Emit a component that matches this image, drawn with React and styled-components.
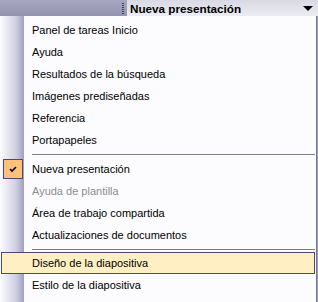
import React from 'react'
import styled, { createGlobalStyle } from 'styled-components'

const Global = createGlobalStyle`
  html, body {
    margin: 0;
    padding: 0;
    background: #9d9db7;
    overflow: hidden;
  }
`

const Frame = styled.div`
  width: 318px;
  height: 302px;
  display: flex;
  flex-direction: column;
  font-family: Tahoma, "Liberation Sans", Arial, sans-serif;
  font-size: 11px;
  color: #000;
`

const TitleBar = styled.div`
  height: 16px;
  display: flex;
  background: linear-gradient(#a6a6c0, #9494b0);
`

const Spacer = styled.div`
  flex: 1;
`

const Grip = styled.div`
  width: 2px;
  margin: 3px 3px 0 1px;
  height: 11px;
  background: repeating-linear-gradient(#3d3d5c 0 1px, transparent 1px 2px);
`

const Title = styled.div`
  width: 191px;
  display: flex;
  align-items: center;
  justify-content: space-between;
  padding: 0 5px 0 3px;
  box-sizing: border-box;
  background: linear-gradient(#d9d9e5, #ececf3);
  font-weight: bold;
  font-size: 11.7px;
`

const Arrow = styled.span`
  width: 0;
  height: 0;
  border-left: 5px solid transparent;
  border-right: 5px solid transparent;
  border-top: 5px solid #000;
  margin-top: 1px;
`

const Menu = styled.div`
  flex: 1;
  width: 317px;
  box-sizing: border-box;
  border-right: 1px solid #76768f;
  padding: 3px 1px 0 1px;
  background: linear-gradient(to right, #fcfcfe 0, #cfcfe0 16px, #9e9ec0 24px, #fcfcfe 24px);
`

const Item = styled.div`
  height: 22px;
  display: flex;
  align-items: center;
  position: relative;
  padding-left: 31px;
  box-sizing: border-box;
  color: ${p => (p.disabled ? '#8d8d8d' : '#000')};
  ${p =>
    p.active &&
    `
    background: #ffefc3;
    border: 1px solid #4b4b6f;
    padding-left: 30px;
    margin-top: -1px;
  `}
`

const Check = styled.span`
  position: absolute;
  left: 2px;
  top: 1px;
  width: 18px;
  height: 18px;
  background: #fdc17c;
  border: 1px solid #4b4b6f;
  display: flex;
  align-items: center;
  justify-content: center;
`

const Separator = styled.div`
  height: 1px;
  margin: 3px 0 3px 31px;
  background: #7b7b98;
`

const groups = [
  [
    { label: 'Panel de tareas Inicio' },
    { label: 'Ayuda' },
    { label: 'Resultados de la búsqueda' },
    { label: 'Imágenes prediseñadas' },
    { label: 'Referencia' },
    { label: 'Portapapeles' },
  ],
  [
    { label: 'Nueva presentación', checked: true },
    { label: 'Ayuda de plantilla', disabled: true },
    { label: 'Área de trabajo compartida' },
    { label: 'Actualizaciones de documentos' },
  ],
  [
    { label: 'Diseño de la diapositiva', active: true },
    { label: 'Estilo de la diapositiva' },
  ],
]

export default function App() {
  return (
    <Frame>
      <Global />
      <TitleBar>
        <Spacer />
        <Grip />
        <Title>
          <span>Nueva presentación</span>
          <Arrow />
        </Title>
      </TitleBar>
      <Menu>
        {groups.map((g, gi) => (
          <React.Fragment key={gi}>
            {gi > 0 && <Separator />}
            {g.map(it => (
              <Item key={it.label} disabled={it.disabled} active={it.active}>
                {it.checked && (
                  <Check>
                    <svg width="8" height="7" viewBox="0 0 8 7">
                      <path d="M1 3 L3 5 L7 1" stroke="#000" strokeWidth="1.6" fill="none" />
                    </svg>
                  </Check>
                )}
                {it.label}
              </Item>
            ))}
          </React.Fragment>
        ))}
      </Menu>
    </Frame>
  )
}
